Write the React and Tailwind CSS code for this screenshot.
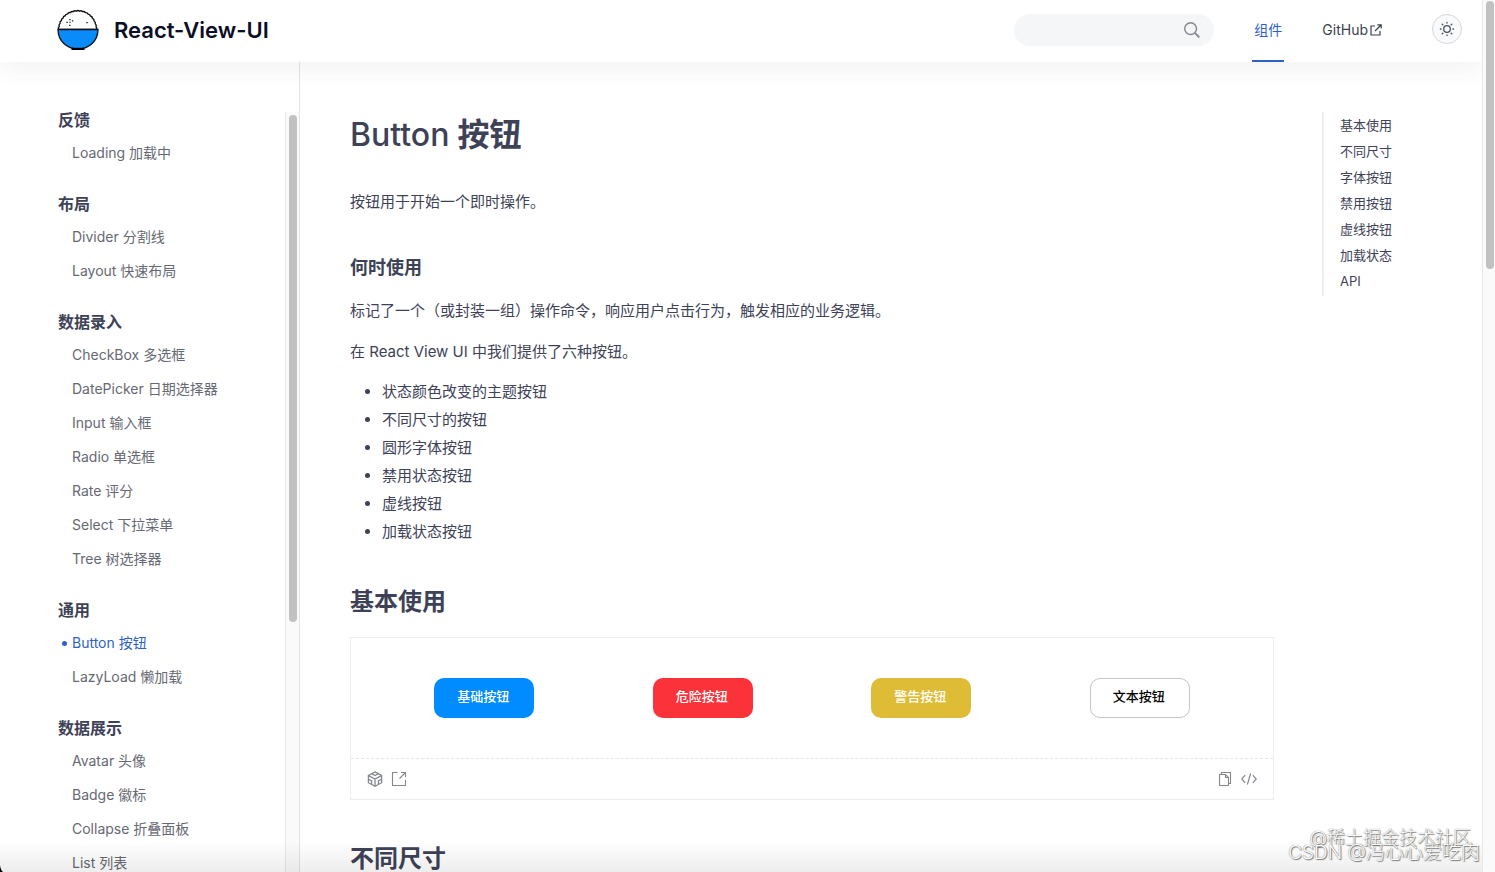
import React from 'react';

const menu = [
    { title: '反馈', items: ['Loading 加载中'] },
    { title: '布局', items: ['Divider 分割线', 'Layout 快速布局'] },
    {
        title: '数据录入',
        items: [
            'CheckBox 多选框',
            'DatePicker 日期选择器',
            'Input 输入框',
            'Radio 单选框',
            'Rate 评分',
            'Select 下拉菜单',
            'Tree 树选择器',
        ],
    },
    { title: '通用', items: ['Button 按钮', 'LazyLoad 懒加载'] },
    { title: '数据展示', items: ['Avatar 头像', 'Badge 徽标', 'Collapse 折叠面板', 'List 列表'] },
];

const anchors = ['基本使用', '不同尺寸', '字体按钮', '禁用按钮', '虚线按钮', '加载状态', 'API'];

const features = [
    '状态颜色改变的主题按钮',
    '不同尺寸的按钮',
    '圆形字体按钮',
    '禁用状态按钮',
    '虚线按钮',
    '加载状态按钮',
];

const demoButtons = [
    { text: '基础按钮', style: 'bg-[#008cff] text-white' },
    { text: '危险按钮', style: 'bg-[#fb323a] text-white' },
    { text: '警告按钮', style: 'bg-[#dfbc35] text-white' },
    { text: '文本按钮', style: 'border border-[#c4c4c8] bg-white text-black' },
];

const Logo = () => (
    <svg className="h-[42px] w-[42px]" viewBox="0 0 42 42" fill="none">
        <path
            d="M1.5 20.500q-.6-1.800.7-3q-.7-1.800.8-3q-.4-1.900 1.300-2.800q-.1-1.900 1.700-2.600q.2-1.900 2.100-2.300q.5-1.800 2.500-1.900q.9-1.700 2.800-1.400q1.200-1.500 2.900-.9q1.400-1.300 3-.5q1.600-1.100 3.200 0q1.700-.8 3 .5q1.800-.5 2.900 1q1.900-.2 2.700 1.500q1.900.1 2.400 1.900q1.900.5 2 2.400q1.700.8 1.600 2.600q1.600 1 1.200 2.800q1.400 1.200.8 2.900q1.100 1.300.4 2.800z"
            fill="#fff"
            stroke="#111"
            strokeWidth="1.4"
        />
        <path d="M1 20.5h40C41 32 32 40 21 40S1 32 1 20.5z" fill="#0a8bfa" stroke="#111" strokeWidth="1.3" />
        <path d="M14.500 38.800h13v2.200h-13z" fill="#000" />
        <path
            d="M9.400 13.400h1.300M12.300 10.600h1.300M12.100 16.400h1.300M14.900 11.800h1.300M12.500 13.400h1M29.400 13.600h1.300"
            stroke="#111"
            strokeWidth="1.2"
        />
    </svg>
);

const SearchIcon = () => (
    <svg className="h-4 w-4" viewBox="0 0 16 16" fill="none" stroke="#85878d" strokeWidth="1.4">
        <circle cx="6.6" cy="6.6" r="5.900" />
        <path d="M10.9 10.9l4.4 4.4" strokeWidth="1.9" />
    </svg>
);

const OutLinkIcon = () => (
    <svg className="h-3 w-3" viewBox="0 0 12 12" fill="none" stroke="currentColor" strokeWidth="1.2">
        <path d="M5 2H1v9h9V7" />
        <path d="M5 7l6-6M7.4 .8h3.8v3.8" />
    </svg>
);

const SunIcon = () => (
    <svg className="h-4 w-4" viewBox="0 0 16 16" fill="none" stroke="#454d64" strokeWidth="1.3" strokeLinecap="round">
        <circle cx="8" cy="8" r="3.3" />
        <path d="M8 1.4v.6M8 14v.6M1.4 8h.6M14 8h.6M3.1 3.1l.7.7M12.2 12.2l.7.7M3.1 12.9l.7-.7M12.2 3.800l.7-.7" />
    </svg>
);

const SandboxIcon = () => (
    <svg className="h-4 w-4" viewBox="0 0 16 16" fill="none" stroke="currentColor" strokeWidth="1.3">
        <path d="M8 .9l6.6 3.6v7.2L8 15.3l-6.6-3.6V4.5z" />
        <path d="M1.6 4.6L8 8.1l6.4-3.5M8 8.1v7M4.8 2.8L8 4.5l3.2-1.7M1.6 8.2l3 1.7v3.3M14.4 8.2l-3 1.7v3.3" />
    </svg>
);

const OpenIcon = () => (
    <svg className="h-4 w-4" viewBox="0 0 16 16" fill="none" stroke="currentColor" strokeWidth="1.1">
        <path d="M6.500 1.500h-5v13h13V9" />
        <path d="M8.500 7.500l6-6M10 1.500h4.500V6" />
    </svg>
);

const CopyIcon = () => (
    <svg className="h-4 w-4" viewBox="0 0 16 16" fill="none" stroke="currentColor" strokeWidth="1.1">
        <path d="M4.500 3.500v-2h9v11h-2" />
        <path d="M2.500 3.500h6l3 3v8h-9zM8.500 3.500v3h3" />
    </svg>
);

const CodeIcon = () => (
    <svg className="h-4 w-4" viewBox="0 0 16 16" fill="none" stroke="currentColor" strokeWidth="1.2">
        <path d="M4.200 4.200L.8 8l3.400 3.800M11.800 4.200L15.200 8l-3.400 3.800M9.600 2.500L6.400 13.500" />
    </svg>
);

const Header = () => (
    <header className="relative z-10 flex h-[62px] shrink-0 items-center bg-white pr-5 pl-[57px] shadow-[0_8px_24px_rgba(0,0,0,0.05)]">
        <a href="#home" className="flex items-center gap-[15px] pb-0.5 text-[22px] font-semibold text-[#0b0e26]">
            <Logo />
            React-View-UI
        </a>
        <div className="ml-auto flex h-full items-center">
            <label className="mr-[38px] mb-0.5 flex h-8 w-[200px] items-center rounded-full bg-[#f4f6f8] pr-[14px] pl-4">
                <input type="text" aria-label="搜索" className="min-w-0 flex-1 bg-transparent text-sm outline-none" />
                <SearchIcon />
            </label>
            <nav className="mr-[50px] flex h-full gap-[38px] text-sm">
                <a href="#components" className="flex items-center border-b-2 border-[#315fc8] px-[2px] text-[#315fc8]">
                    组件
                </a>
                <a href="#github" className="flex items-center gap-0.5 pb-0.5 text-[#3b3f50]">
                    GitHub
                    <OutLinkIcon />
                </a>
            </nav>
            <button
                type="button"
                aria-label="切换主题"
                className="mb-1 flex h-[30px] w-[30px] items-center justify-center rounded-full border border-[#d4d6da] bg-[#f9fafb]"
            >
                <SunIcon />
            </button>
        </div>
    </header>
);

const Sidebar = () => (
    <aside className="flex w-[300px] shrink-0 border-r border-[#e3e3e5] pt-[46px]">
        <nav className="flex-1 overflow-hidden pl-[58px]">
            {menu.map((group) => (
                <section key={group.title} className="mb-[22px]">
                    <h4 className="text-base leading-6 font-semibold text-[#3d4257]">{group.title}</h4>
                    <ul className="mt-1">
                        {group.items.map((item) => (
                            <li key={item}>
                                <a
                                    href="#item"
                                    className={`flex h-[34px] items-center text-sm ${item === 'Button 按钮' ? 'text-[#315fc8]' : 'text-[#666973]'
                                        }`}
                                >
                                    <span className="flex w-[14px] pl-1">
                                        {item === 'Button 按钮' && <i className="h-[5px] w-[5px] rounded-full bg-[#315fc8]" />}
                                    </span>
                                    {item}
                                </a>
                            </li>
                        ))}
                    </ul>
                </section>
            ))}
        </nav>
        {/* Scrollbar */}
        <div className="mt-1 w-[14px] border-l border-[#e8e8e8] bg-[#fafafa] pt-[3px] pl-[3px]">
            <div className="h-[507px] w-2 rounded-full bg-[#c1c1c1]" />
        </div>
    </aside>
);

const Demo = () => (
    <div className="border border-[#ebedf1]">
        <div className="flex justify-around px-6 py-10">
            {demoButtons.map((btn) => (
                <button
                    key={btn.text}
                    type="button"
                    className={`h-10 w-[100px] rounded-[10px] pr-0.5 pb-1 text-[13px] font-medium ${btn.style}`}
                >
                    {btn.text}
                </button>
            ))}
        </div>
        <div className="flex h-[41px] items-center gap-2 border-t border-dashed border-[#e4e6ea] px-4 text-[#85888f]">
            <button type="button" aria-label="CodeSandbox"><SandboxIcon /></button>
            <button type="button" aria-label="新窗口打开"><OpenIcon /></button>
            <button type="button" aria-label="复制代码" className="ml-auto"><CopyIcon /></button>
            <button type="button" aria-label="查看代码"><CodeIcon /></button>
        </div>
    </div>
);

const App = () => {
    return (
        <div className="relative flex h-screen overflow-hidden bg-white font-['Inter','Noto_Sans_CJK_SC',sans-serif] text-[#3d4257]">
            <div className="flex min-w-0 flex-1 flex-col">
                <Header />
                <div className="flex min-h-0 flex-1">
                    <Sidebar />
                    <main className="min-w-0 flex-1 overflow-hidden pt-[50px] pl-[50px] text-[15px] leading-7">
                        <h1 className="text-[32px] leading-[46px] font-semibold">
                            <span className="font-medium">Button</span> 按钮
                        </h1>
                        <p className="mt-[30px]">按钮用于开始一个即时操作。</p>
                        <h3 className="mt-[38px] text-lg leading-7 font-semibold">何时使用</h3>
                        <p className="mt-[15px]">标记了一个（或封装一组）操作命令，响应用户点击行为，触发相应的业务逻辑。</p>
                        <p className="mt-[13px]">在 React View UI 中我们提供了六种按钮。</p>
                        <ul className="mt-3 list-disc pl-8">
                            {features.map((text) => (
                                <li key={text}>{text}</li>
                            ))}
                        </ul>
                        <h2 className="mt-[38px] mb-[17px] text-2xl leading-9 font-semibold">基本使用</h2>
                        <Demo />
                        <h2 className="mt-[41px] text-2xl leading-9 font-semibold">不同尺寸</h2>
                    </main>
                    <aside className="ml-12 w-[160px] shrink-0 pt-[50px]">
                        <ul className="border-l-2 border-[#ebedf1] pb-0.5 pl-4 text-[13px] leading-[26px]">
                            {anchors.map((text) => (
                                <li key={text}>
                                    <a href="#anchor">{text}</a>
                                </li>
                            ))}
                        </ul>
                    </aside>
                </div>
            </div>

            {/* Page scrollbar */}
            <div className="z-20 w-[13px] shrink-0 border-l border-[#e8e8e8] bg-[#fafafa] pt-px pl-[3px]">
                <div className="h-[268px] w-2 rounded-full bg-[#c1c1c1]" />
            </div>

            {/* Bottom fade */}
            <div className="pointer-events-none absolute inset-x-0 bottom-0 h-8 bg-gradient-to-b from-transparent to-black/7" />
            <svg className="absolute bottom-0 left-0 h-2 w-1" viewBox="0 0 4 8">
                <path d="M0 1C.3 4 1.2 6.500 3 8H0z" fill="#000" />
            </svg>

            {/* Watermarks */}
            <p className="absolute right-6 bottom-[22px] text-lg leading-6 font-light text-white [text-shadow:0_0_1px_#666,1px_1px_1px_#777]">
                @稀土掘金技术社区
            </p>
            <p className="absolute right-[15px] bottom-[7px] text-[19px] leading-6 font-light text-white [text-shadow:0_0_1px_#666,1px_1px_1px_#777]">
                CSDN @冯心心爱吃肉
            </p>
        </div>
    );
};

export default App;
